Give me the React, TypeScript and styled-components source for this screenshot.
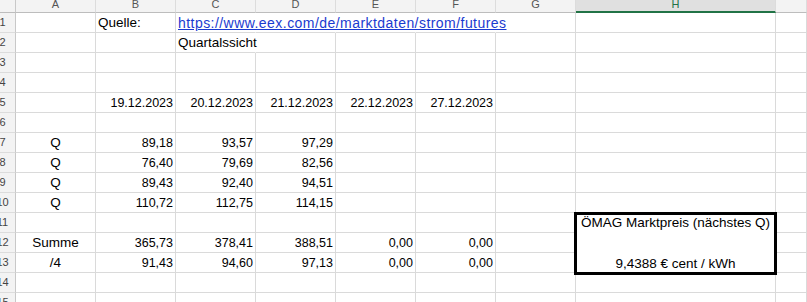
import React from 'react'
import styled, { createGlobalStyle, css } from 'styled-components'

const GlobalStyle = createGlobalStyle`
  html, body {
    margin: 0;
    padding: 0;
    background: #fff;
    overflow: hidden;
  }
  body {
    font-family: "Liberation Sans", Arial, sans-serif;
  }
`

type Align = 'left' | 'center' | 'right'

type CellSpec = {
    v?: React.ReactNode
    align?: Align
    num?: boolean
    open?: boolean
}

const COLS = ['A', 'B', 'C', 'D', 'E', 'F', 'G', 'H', 'I']
const ROWS = 15

const num = (v: string): CellSpec => ({ v, align: 'right', num: true })
const mid = (v: string): CellSpec => ({ v, align: 'center' })

function App() {
    const data: Record<number, Record<string, CellSpec>> = {
        1: {
            B: { v: 'Quelle:' },
            C: {
                v: <Link href="https://www.eex.com/de/marktdaten/strom/futures">https://www.eex.com/de/marktdaten/strom/futures</Link>,
                open: true,
            },
            D: { open: true },
            E: { open: true },
            F: { open: true },
        },
        2: { C: { v: 'Quartalssicht', open: true } },
        5: {
            B: num('19.12.2023'),
            C: num('20.12.2023'),
            D: num('21.12.2023'),
            E: num('22.12.2023'),
            F: num('27.12.2023'),
        },
        7: { A: mid('Q'), B: num('89,18'), C: num('93,57'), D: num('97,29') },
        8: { A: mid('Q'), B: num('76,40'), C: num('79,69'), D: num('82,56') },
        9: { A: mid('Q'), B: num('89,43'), C: num('92,40'), D: num('94,51') },
        10: { A: mid('Q'), B: num('110,72'), C: num('112,75'), D: num('114,15') },
        12: {
            A: mid('Summe'),
            B: num('365,73'),
            C: num('378,41'),
            D: num('388,51'),
            E: num('0,00'),
            F: num('0,00'),
        },
        13: {
            A: mid('/4'),
            B: num('91,43'),
            C: num('94,60'),
            D: num('97,13'),
            E: num('0,00'),
            F: num('0,00'),
        },
    }

    return (
        <>
            <GlobalStyle />
            <Sheet>
                <Corner />
                {COLS.map(c => (
                    // column I is wider than the window, its letter sits off screen
                    <ColHead key={c} $active={c === 'H'}>{c === 'I' ? '' : c}</ColHead>
                ))}

                {Array.from({ length: ROWS }, (_, i) => {
                    const r = i + 1
                    return (
                        <React.Fragment key={r}>
                            <RowHead><span>{r}</span></RowHead>
                            {COLS.map(c => {
                                if (c === 'H' && r >= 11 && r <= 13) return null
                                const cell = data[r]?.[c] || {}
                                return (
                                    <Cell key={c} $align={cell.align} $num={cell.num} $open={cell.open}>
                                        {cell.v}
                                    </Cell>
                                )
                            })}
                        </React.Fragment>
                    )
                })}

                <PriceBox>
                    <span>ÖMAG Marktpreis (nächstes Q)</span>
                    <span>9,4388 € cent / kWh</span>
                </PriceBox>
            </Sheet>
        </>
    )
}

export default App

const Sheet = styled.div`
    display: grid;
    grid-template-columns: 16px repeat(7, 80px) 200px 1fr;
    grid-template-rows: 13px repeat(${ROWS}, 20px);
    width: 807px;
    height: 302px;
    overflow: hidden;
`

const Corner = styled.div`
    background: #f3f3f3;
    border-right: 1px solid #c8c8c8;
    border-bottom: 1px solid #bdbdbd;
`

const ColHead = styled.div<{ $active?: boolean }>`
    display: flex;
    justify-content: center;
    align-items: flex-end;
    box-sizing: border-box;
    padding-bottom: 2px;
    font-size: 11px;
    line-height: 11px;
    color: #555;
    background: #f3f3f3;
    border-right: 1px solid #dcdcdc;
    border-bottom: 1px solid #bdbdbd;
    overflow: hidden;

    ${p => p.$active && css`
        background: #e0e0e0;
        color: #217346;
        padding-bottom: 1px;
        border-bottom: 2px solid #217346;
    `}
`

const RowHead = styled.div`
    display: flex;
    justify-content: center;
    align-items: center;
    box-sizing: border-box;
    padding-right: 10px;
    font-size: 11px;
    line-height: 19px;
    color: #444;
    background: #f3f3f3;
    border-right: 1px solid #c8c8c8;
    border-bottom: 1px solid #dcdcdc;
    white-space: nowrap;
`

const Cell = styled.div<{ $align?: Align; $num?: boolean; $open?: boolean }>`
    display: flex;
    align-items: flex-end;
    justify-content: ${p =>
        p.$align === 'right' ? 'flex-end' : p.$align === 'center' ? 'center' : 'flex-start'};
    box-sizing: border-box;
    min-width: 0;
    padding: 0 2px 1px 2px;
    font-size: ${p => (p.$num ? '12.5px' : '13.5px')};
    line-height: 16px;
    color: #000;
    white-space: nowrap;
    border-right: 1px solid ${p => (p.$open ? 'transparent' : '#dadada')};
    border-bottom: 1px solid #dadada;
`

const Link = styled.a`
    color: #1a3ad0;
    text-decoration: underline;
    font-size: 14px;
    letter-spacing: 0.45px;
`

const PriceBox = styled.div`
    grid-column: 9;
    grid-row: 12 / span 3;
    position: relative;
    z-index: 1;
    margin: -1px -1px -2px -2px;
    display: flex;
    flex-direction: column;
    justify-content: space-between;
    align-items: center;
    border: 3px solid #000;
    background: #fff;
    font-size: 13.5px;
    line-height: 16px;
    color: #000;
    white-space: nowrap;
`
